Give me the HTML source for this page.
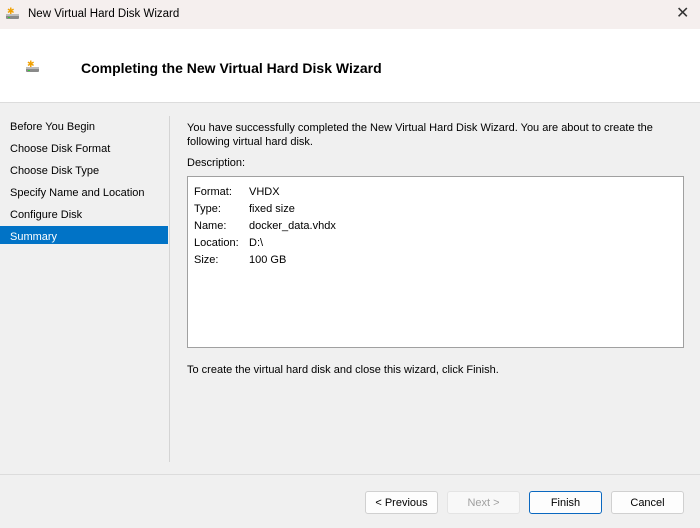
<!DOCTYPE html>
<html><head><style>
*{margin:0;padding:0;box-sizing:border-box}
body{width:700px;height:528px;background:#f0f0f0;font-family:"Liberation Sans",sans-serif;font-size:11px;color:#000;position:relative;overflow:hidden}
.a{position:absolute;white-space:nowrap}
.btn{position:absolute;top:491px;height:23px;width:73px;border:1px solid #d0d0d0;border-radius:3px;background:#fdfdfd;text-align:center;line-height:22px;font-size:11px}
</style></head><body>
<div class="a" style="left:0;top:0;width:700px;height:29px;background:#f5efee"></div>
<svg class="a" style="left:5px;top:5px" width="16" height="16" viewBox="0 0 16 16"><rect x="1" y="9" width="13" height="5" rx="1" fill="#8a8a8a"/><rect x="1" y="9" width="13" height="2" fill="#bdbdbd"/><rect x="3" y="12" width="2" height="1" fill="#3c3"/><text x="2" y="9" font-size="9" fill="#f0a000">✱</text></svg>
<div class="a" style="left:28px;top:8px;font-size:11.5px">New Virtual Hard Disk Wizard</div>
<div class="a" style="left:676px;top:3px;font-size:16px;color:#333">✕</div>
<div class="a" style="left:0;top:29px;width:700px;height:74px;background:#fff;border-bottom:1px solid #dcdcdc"></div>
<svg class="a" style="left:25px;top:58px" width="16" height="16" viewBox="0 0 16 16"><rect x="1" y="9" width="13" height="5" rx="1" fill="#8a8a8a"/><rect x="1" y="9" width="13" height="2" fill="#bdbdbd"/><rect x="3" y="12" width="2" height="1" fill="#3c3"/><text x="2" y="9" font-size="9" fill="#f0a000">✱</text></svg>
<div class="a" style="left:81px;top:60px;font-size:14px;font-weight:bold">Completing the New Virtual Hard Disk Wizard</div>
<div class="a" style="left:10px;top:121px">Before You Begin</div>
<div class="a" style="left:10px;top:143px">Choose Disk Format</div>
<div class="a" style="left:10px;top:165px">Choose Disk Type</div>
<div class="a" style="left:10px;top:187px">Specify Name and Location</div>
<div class="a" style="left:10px;top:209px">Configure Disk</div>
<div class="a" style="left:0;top:226px;width:168px;height:18px;background:#0173c6"></div>
<div class="a" style="left:10px;top:231px;color:#fff">Summary</div>
<div class="a" style="left:169px;top:116px;width:1px;height:346px;background:#d4d4d4"></div>
<div class="a" style="left:187px;top:121px;line-height:14px">You have successfully completed the New Virtual Hard Disk Wizard. You are about to create the<br>following virtual hard disk.</div>
<div class="a" style="left:187px;top:157px">Description:</div>
<div class="a" style="left:187px;top:176px;width:497px;height:172px;background:#fff;border:1px solid #a0a0a0"></div>
<div class="a" style="left:194px;top:184px;line-height:17px">Format:<br>Type:<br>Name:<br>Location:<br>Size:</div>
<div class="a" style="left:249px;top:184px;line-height:17px">VHDX<br>fixed size<br>docker_data.vhdx<br>D:\<br>100 GB</div>
<div class="a" style="left:187px;top:364px">To create the virtual hard disk and close this wizard, click Finish.</div>
<div class="a" style="left:0;top:474px;width:700px;height:1px;background:#dcdcdc"></div>
<div class="btn" style="left:365px">&lt; Previous</div>
<div class="btn" style="left:447px;color:#a0a0a0;border-color:#e4e4e4;background:#f8f8f8">Next &gt;</div>
<div class="btn" style="left:529px;border-color:#0a68c0">Finish</div>
<div class="btn" style="left:611px">Cancel</div>
</body></html>
